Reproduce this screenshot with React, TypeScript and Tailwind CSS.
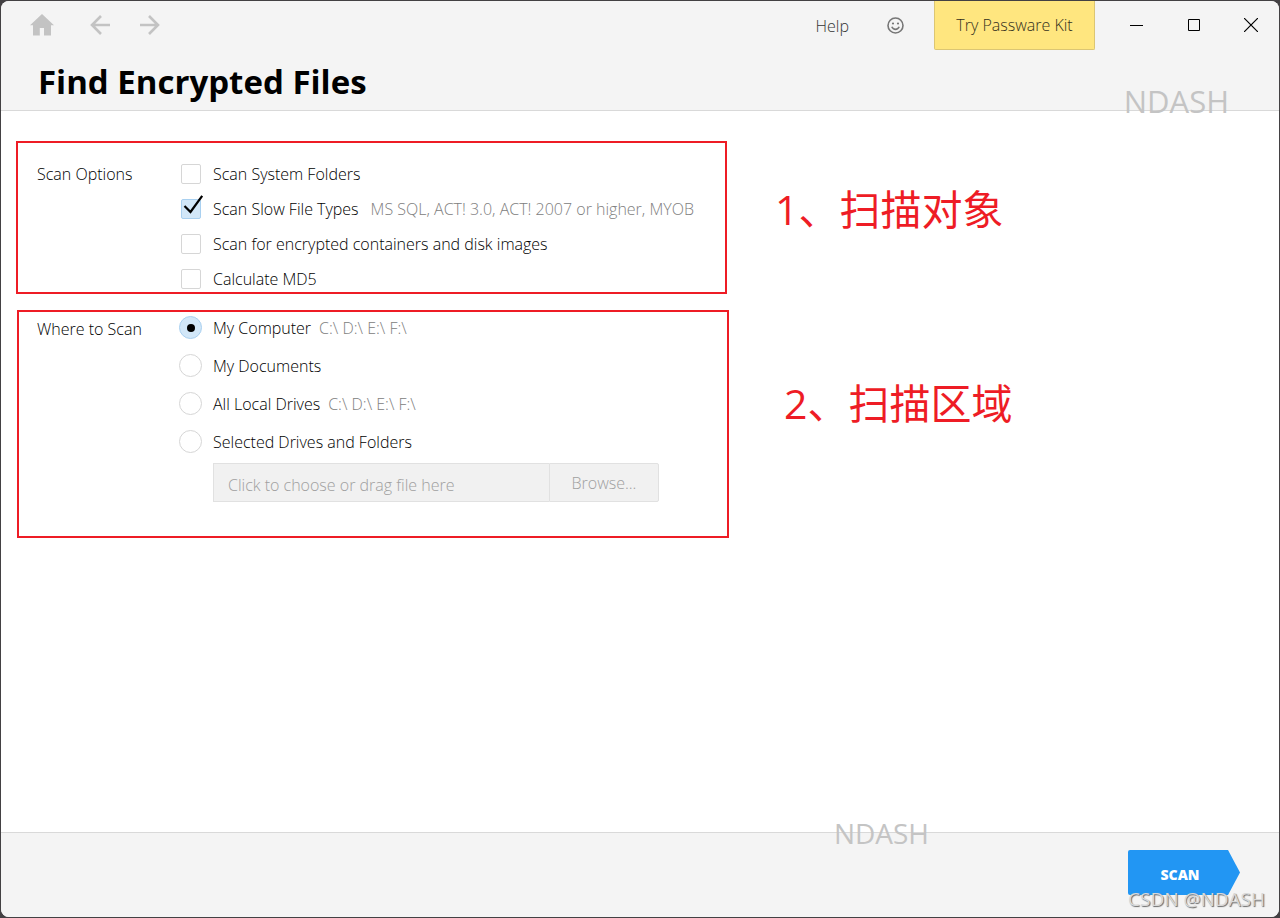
import React, { useState } from 'react';

type ScanOption = { id: string; label: string; hint?: string };

const scanOptions: ScanOption[] = [
  { id: 'system', label: 'Scan System Folders' },
  { id: 'slow', label: 'Scan Slow File Types', hint: 'MS SQL, ACT! 3.0, ACT! 2007 or higher, MYOB' },
  { id: 'containers', label: 'Scan for encrypted containers and disk images' },
  { id: 'md5', label: 'Calculate MD5' },
];

const locations: ScanOption[] = [
  { id: 'computer', label: 'My Computer', hint: 'C:\\ D:\\ E:\\ F:\\' },
  { id: 'documents', label: 'My Documents' },
  { id: 'local', label: 'All Local Drives', hint: 'C:\\ D:\\ E:\\ F:\\' },
  { id: 'selected', label: 'Selected Drives and Folders' },
];

const HomeIcon = () => (
  <svg width="24" height="22" viewBox="0 0 24 22" fill="currentColor" aria-hidden="true">
    <path d="M12 0 24 11.2H21V21.5H14V14H9.8V21.5H3V11.2H0Z" />
  </svg>
);

const ArrowIcon = ({ className = '' }: { className?: string }) => (
  <svg className={className} width="20" height="20" viewBox="0 0 20 20" fill="none" stroke="currentColor" strokeWidth="2.6" aria-hidden="true">
    <path d="M20 10H2M11 1 2 10l9 9" />
  </svg>
);

const SmileIcon = () => (
  <svg width="17" height="17" viewBox="0 0 17 17" fill="none" stroke="currentColor" strokeWidth="1.6" aria-hidden="true">
    <circle cx="8.5" cy="8.5" r="7.5" />
    <path d="M4.8 9.8c.8 1.8 2 2.6 3.7 2.6s2.9-.8 3.7-2.6" />
    <circle cx="6" cy="6.5" r="1.1" fill="currentColor" stroke="none" />
    <circle cx="11" cy="6.5" r="1.1" fill="currentColor" stroke="none" />
  </svg>
);

const windowButton = 'flex h-12 w-[57px] items-center justify-center text-black hover:bg-black/5';

const TitleBar = () => (
  <div className="flex items-start justify-between">
    <nav className="flex h-12 items-center pl-[29px] text-[#c3c3c3]">
      <button aria-label="Home"><HomeIcon /></button>
      <button aria-label="Back" className="ml-9"><ArrowIcon /></button>
      <button aria-label="Forward" className="ml-[30px]"><ArrowIcon className="rotate-180" /></button>
    </nav>
    <div className="flex items-start">
      <a href="#help" className="flex h-[50px] items-center text-base font-light text-[#333333]">Help</a>
      <button aria-label="Feedback" className="ml-[38px] flex h-12 items-center text-[#777777]"><SmileIcon /></button>
      <button className="ml-[30px] mr-[13px] h-[49px] w-[161px] rounded-b-xs border border-t-0 border-[#dcc673] bg-[#ffe67f] text-base font-light text-[#333020]">
        Try Passware Kit
      </button>
      <button aria-label="Minimize" className={windowButton}>
        <svg width="13" height="13" viewBox="0 0 13 13" stroke="currentColor"><path d="M0 6.5h13" /></svg>
      </button>
      <button aria-label="Maximize" className={windowButton}>
        <svg width="12" height="12" viewBox="0 0 12 12" fill="none" stroke="currentColor"><path d="M.5.5h11v11H.5z" /></svg>
      </button>
      <button aria-label="Close" className={windowButton}>
        <svg width="14" height="14" viewBox="0 0 14 14" stroke="currentColor" strokeWidth="1.2"><path d="m0 0 14 14M14 0 0 14" /></svg>
      </button>
    </div>
  </div>
);

const Annotation = ({ children }: { children: React.ReactNode }) => (
  <p className="whitespace-nowrap text-[41px] font-normal leading-[60px] text-[#ee1c25]">{children}</p>
);

const App: React.FC = () => {
  const [checked, setChecked] = useState<string[]>(['slow']);
  const [location, setLocation] = useState('computer');

  const toggle = (id: string) =>
    setChecked((prev) => (prev.includes(id) ? prev.filter((x) => x !== id) : [...prev, id]));

  return (
    <div className="min-h-screen flex flex-col bg-[#434143] p-px font-['Open_Sans','Noto_Sans_CJK_SC',sans-serif]">
      <div className="relative flex flex-1 flex-col overflow-hidden rounded-lg bg-white">
        <header className="relative border-b border-[#d9d9d9] bg-[#f4f4f4]">
          <TitleBar />
          <h1 className="pb-1 pl-[37px] pt-[7px] text-[33px] font-bold leading-[48px] text-black">Find Encrypted Files</h1>
          <span className="absolute right-[50px] top-20 text-[31px] leading-10 text-[#c4c4c4]">NDASH</span>
        </header>

        <main className="flex flex-1 flex-col gap-4 pl-[15px] pt-[30px] text-base font-light leading-5 text-black">
          <section className="flex items-start gap-12">
            <div role="group" aria-labelledby="options-title" className="flex w-[711px] border-2 border-[#ee1c25] pb-[3px] pl-[19px] pt-[21px]">
              <h2 id="options-title" className="w-36">Scan Options</h2>
              <div className="flex flex-col gap-[15px]">
                {scanOptions.map((option) => (
                  <div key={option.id} className="flex h-5 items-center">
                    <span className="relative mr-3 flex">
                      <input
                        id={option.id}
                        type="checkbox"
                        checked={checked.includes(option.id)}
                        onChange={() => toggle(option.id)}
                        className="size-5 appearance-none rounded-xs border border-[#d6d6d6] bg-white checked:border-[#a9d0f0] checked:bg-[#d2e7f8]"
                      />
                      {checked.includes(option.id) && (
                        <svg className="pointer-events-none absolute -top-1 left-0" width="24" height="24" viewBox="0 0 24 24" fill="none" stroke="#000" strokeWidth="2.2" aria-hidden="true">
                          <path d="m3.5 11 6 6L21.2.8" />
                        </svg>
                      )}
                    </span>
                    <label htmlFor={option.id}>{option.label}</label>
                    {option.hint && <span className="ml-3 text-[#808080]">{option.hint}</span>}
                  </div>
                ))}
              </div>
            </div>
            <div className="pt-[38px]"><Annotation>1、扫描对象</Annotation></div>
          </section>

          <section className="ml-px flex items-start gap-[55px]">
            <div role="radiogroup" aria-labelledby="where-title" className="flex w-[712px] border-2 border-[#ee1c25] pb-[34px] pl-[18px] pt-1">
              <h2 id="where-title" className="w-[142px] pt-[3px]">Where to Scan</h2>
              <div className="flex flex-col gap-[15px]">
                {locations.map((item) => (
                  <div key={item.id} className="flex h-[23px] items-center">
                    <input
                      id={item.id}
                      type="radio"
                      name="location"
                      checked={location === item.id}
                      onChange={() => setLocation(item.id)}
                      className="mr-[11px] flex size-[23px] appearance-none items-center justify-center rounded-full border border-[#d6d6d6] bg-white before:size-2 before:rounded-full checked:border-[#a9d0f0] checked:bg-[#d2e7f8] checked:before:bg-black"
                    />
                    <label htmlFor={item.id} className="pt-px">{item.label}</label>
                    {item.hint && <span className="ml-2 pt-px text-[#808080]">{item.hint}</span>}
                  </div>
                ))}
                <div className="-mt-[5px] ml-[34px] flex h-[39px]">
                  <input
                    aria-label="Drives and folders"
                    placeholder="Click to choose or drag file here"
                    disabled
                    className="w-[336px] border border-r-0 border-[#e1e1e1] bg-[#f1f1f1] px-3.5 pt-1 placeholder:text-[#a0a0a0]"
                  />
                  <button disabled className="w-[110px] rounded-r-xs border border-[#e1e1e1] bg-[#f1f1f1] text-[#a0a0a0]">
                    Browse...
                  </button>
                </div>
              </div>
            </div>
            <div className="pt-[63px]"><Annotation>2、扫描区域</Annotation></div>
          </section>
        </main>

        <footer className="relative flex justify-end border-t border-[#d9d9d9] bg-[#f4f4f4] pb-[22px] pr-[39px] pt-[17px]">
          <button className="h-[45px] w-28 rounded-xs bg-[#2296f3] pr-2 pt-1 text-sm font-extrabold text-white [clip-path:polygon(0_0,100px_0,100%_50%,100px_100%,0_100%)]">
            SCAN
          </button>
          <span className="absolute right-[350px] -top-5 text-[28px] leading-10 text-[#c4c4c4]">NDASH</span>
          <span className="absolute bottom-1 right-3.5 text-[19px] leading-7 text-[#d8d8d8] [text-shadow:1px_1px_1px_#666]">CSDN @NDASH</span>
        </footer>
      </div>
    </div>
  );
};

export default App;
